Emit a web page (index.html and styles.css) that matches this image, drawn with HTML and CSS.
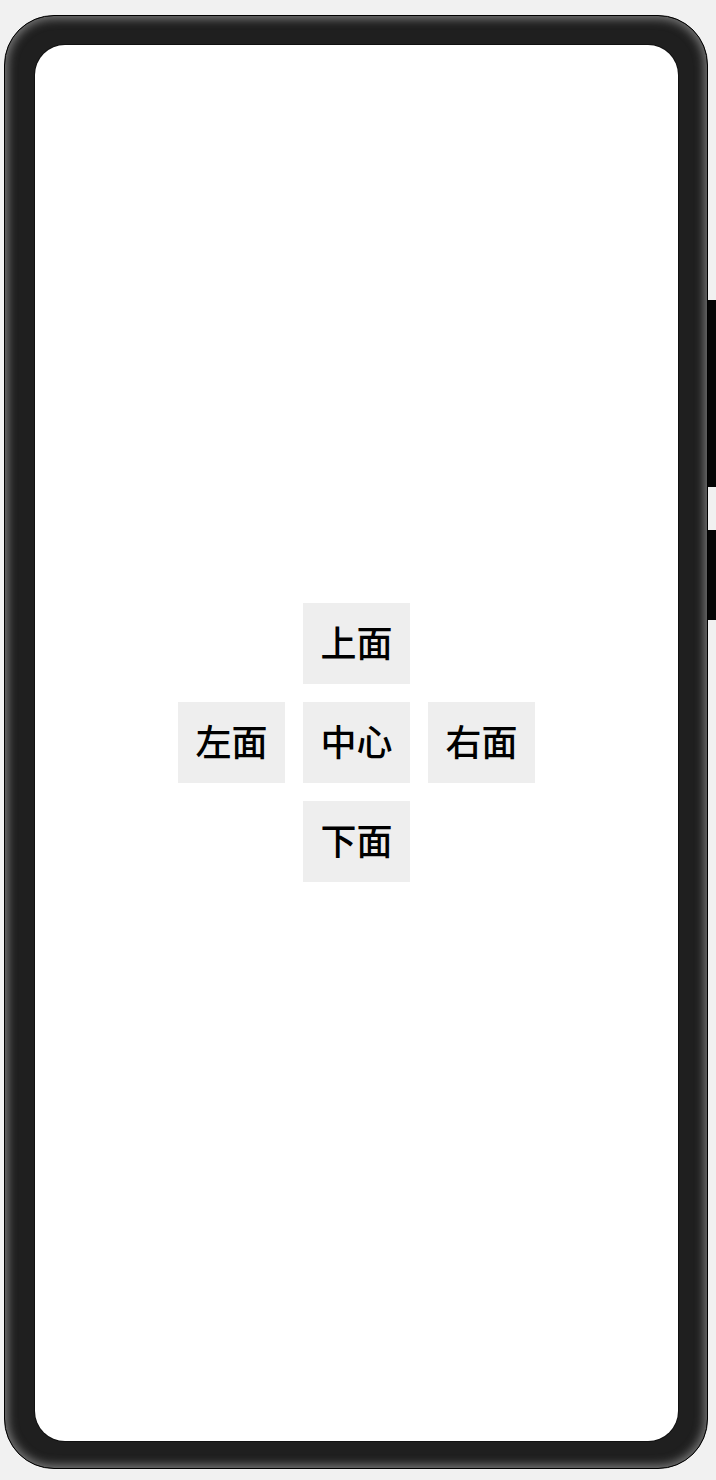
FILE: index.html
```html
<!DOCTYPE html>
<html lang="zh">
<head>
<meta charset="utf-8">
<link rel="stylesheet" href="styles.css">
</head>
<body>
<div class="device">
  <div class="side-btn side-btn-power"></div>
  <div class="side-btn side-btn-volume"></div>
  <div class="phone">
    <div class="screen">
      <div class="cross">
        <div class="cell cell-top">上面</div>
        <div class="cell cell-left">左面</div>
        <div class="cell cell-center">中心</div>
        <div class="cell cell-right">右面</div>
        <div class="cell cell-bottom">下面</div>
      </div>
    </div>
  </div>
</div>
</body>
</html>
```
FILE: styles.css
```css
html, body {
  margin: 0;
  padding: 0;
  background: #f1f1f1;
  overflow: hidden;
}
body {
  width: 716px;
  height: 1480px;
}
.device {
  position: relative;
  margin: 15px 0 0 4px;
  width: 704px;
  height: 1454px;
}
.phone {
  position: relative;
  z-index: 1;
  box-sizing: border-box;
  width: 704px;
  height: 1454px;
  border: 1.5px solid #000;
  border-radius: 50px;
  background: #1f1f1f;
  box-shadow: inset 0 0 10px 3px rgba(130,130,130,0.9);
  padding: 28.5px 29.5px 27.5px 29.5px;
}
.screen {
  width: 100%;
  height: 100%;
  background: #fff;
  border-radius: 30px;
  display: flex;
  align-items: center;
  justify-content: center;
  box-shadow: 0 0 0 1px #111;
}
.side-btn {
  position: absolute;
  z-index: 0;
  left: 698px;
  width: 20px;
  background: #050505;
  border-radius: 5px;
}
.side-btn-power {
  top: 285px;
  height: 187px;
}
.side-btn-volume {
  top: 515px;
  height: 90px;
}
.cross {
  display: grid;
  grid-template-columns: repeat(3, 107px);
  grid-template-rows: repeat(3, 81px);
  gap: 18px;
  margin-left: 1px;
}
.cell {
  box-sizing: border-box;
  background: #eeeeee;
  display: flex;
  align-items: center;
  justify-content: center;
  padding-bottom: 5px;
  font-family: "Noto Sans CJK SC", "Noto Sans", sans-serif;
  font-size: 36px;
  font-weight: 500;
  color: #000;
  line-height: 1;
}
.cell-top { grid-column: 2; grid-row: 1; }
.cell-left { grid-column: 1; grid-row: 2; }
.cell-center { grid-column: 2; grid-row: 2; }
.cell-right { grid-column: 3; grid-row: 2; }
.cell-bottom { grid-column: 2; grid-row: 3; }
```
